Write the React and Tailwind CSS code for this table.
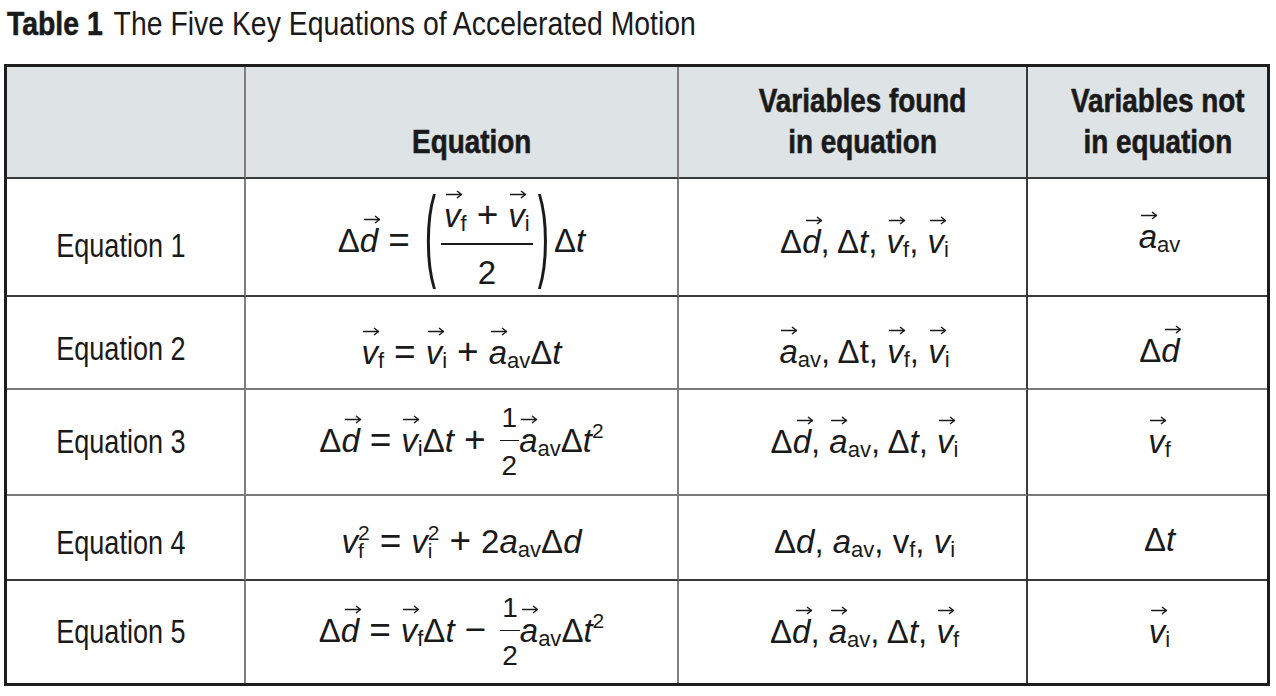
import React from "react";

const SANS = "font-['Liberation_Sans','Arial',sans-serif]";

const I = ({ children }) => <span className="italic">{children}</span>;

const Sub = ({ children }) => (
  <span className="not-italic text-[22px] leading-none align-[-4px]">{children}</span>
);

const Sup = ({ children }) => (
  <span className="not-italic text-[21px] leading-none align-[14px]">{children}</span>
);

const SubSup = ({ sub, sup }) => (
  <span className="inline-flex flex-col not-italic text-[21px] leading-[18px] align-[13px]">
    <span>{sup}</span>
    <span>{sub}</span>
  </span>
);

// small vector arrow drawn over a letter
const Arrow = ({ left }) => (
  <svg
    className={`absolute top-[-9px] ${left}`}
    width="17"
    height="9"
    viewBox="0 0 17 9"
    fill="none"
    stroke="currentColor"
    strokeWidth="1.5"
  >
    <path d="M0 4.5h15.5" />
    <path d="M11 1l4.5 3.5-4.5 3.5" strokeLinejoin="round" />
  </svg>
);

const V = ({ ch, sub }) => (
  <span className="relative inline-block leading-none">
    <span className="italic">{ch}</span>
    <Arrow left={ch === "d" ? "left-[4px]" : "left-[2px]"} />
    {sub && <Sub>{sub}</Sub>}
  </span>
);

const Op = ({ c }) => <span className="text-[37px] mx-[10px]">{c}</span>;

const Paren = ({ c }) => (
  <span className="inline-block text-[34px] leading-none scale-y-[3] align-[8px] mx-[5px]">{c}</span>
);

const Frac = ({ num, den }) => (
  <span className="inline-flex flex-col items-center align-[25px]">
    <span className="leading-[34px] pb-[8px] px-[3px]">{num}</span>
    <span className="w-full border-t-2 border-[#1a1a1a]" />
    <span className="leading-[34px] pt-[11px]">{den}</span>
  </span>
);

const Half = () => (
  <span className="inline-flex flex-col items-center text-[28px] align-[25px] ml-[4px]">
    <span className="leading-[28px] pb-[8px] px-[2px]">1</span>
    <span className="w-full border-t-[1.5px] border-[#1a1a1a]" />
    <span className="leading-[28px] pt-[11px]">2</span>
  </span>
);

const eqs = [
  <>
    Δ<V ch="d" />
    <Op c="=" />
    <Paren c="(" />
    <Frac
      num={
        <>
          <V ch="v" sub="f" />
          <Op c="+" />
          <V ch="v" sub="i" />
        </>
      }
      den="2"
    />
    <Paren c=")" />Δ<I>t</I>
  </>,
  <>
    <V ch="v" sub="f" />
    <Op c="=" />
    <V ch="v" sub="i" />
    <Op c="+" />
    <V ch="a" sub="av" />Δ<I>t</I>
  </>,
  <>
    Δ<V ch="d" />
    <Op c="=" />
    <V ch="v" sub="i" />Δ<I>t</I>
    <Op c="+" />
    <Half />
    <V ch="a" sub="av" />Δ<I>t</I>
    <Sup>2</Sup>
  </>,
  <>
    <I>v</I>
    <SubSup sub="f" sup="2" />
    <Op c="=" />
    <I>v</I>
    <SubSup sub="i" sup="2" />
    <Op c="+" />
    2<I>a</I>
    <Sub>av</Sub>Δ<I>d</I>
  </>,
  <>
    Δ<V ch="d" />
    <Op c="=" />
    <V ch="v" sub="f" />Δ<I>t</I>
    <Op c="−" />
    <Half />
    <V ch="a" sub="av" />Δ<I>t</I>
    <Sup>2</Sup>
  </>,
];

const found = [
  <>
    Δ<V ch="d" />, Δ<I>t</I>, <V ch="v" sub="f" />, <V ch="v" sub="i" />
  </>,
  <>
    <V ch="a" sub="av" />, Δt, <V ch="v" sub="f" />, <V ch="v" sub="i" />
  </>,
  <>
    Δ<V ch="d" />, <V ch="a" sub="av" />, Δ<I>t</I>, <V ch="v" sub="i" />
  </>,
  <>
    Δ<I>d</I>, <I>a</I>
    <Sub>av</Sub>, v<Sub>f</Sub>, <I>v</I>
    <Sub>i</Sub>
  </>,
  <>
    Δ<V ch="d" />, <V ch="a" sub="av" />, Δ<I>t</I>, <V ch="v" sub="f" />
  </>,
];

const missing = [
  <V ch="a" sub="av" />,
  <>
    Δ<V ch="d" />
  </>,
  <V ch="v" sub="f" />,
  <>
    Δ<I>t</I>
  </>,
  <V ch="v" sub="i" />,
];

// borders: columns 1-2 grey, column 3 dark; row lines vary like the print
const colLine = ["border-r-2 border-r-[#7f7f7f]", "border-r-2 border-r-[#7f7f7f]", "border-r-2 border-r-[#3a3a3a]", ""];
const rowLine = [
  "border-b-2 border-b-[#3a3a3a]",
  "border-b-2 border-b-[#7a7a7a]",
  "border-b-2 border-b-[#7a7a7a]",
  "border-b-2 border-b-[#3a3a3a]",
  "",
];

// per-cell top padding to sit each line on the printed baseline
const pads = [
  ["pt-[17px] pr-[10px]", "pt-[13px]", "pt-[9px] pl-[24px]", "pt-0 pl-[24px]"],
  ["pt-[12px] pr-[10px]", "pt-[20px]", "pt-[18px] pl-[24px]", "pt-[16px] pl-[24px]"],
  ["pt-0 pr-[10px]", "pt-0", "pt-0 pl-[24px]", "pt-0 pl-[24px]"],
  ["pt-[10px] pr-[10px]", "pt-[8px]", "pt-[8px] pl-[24px]", "pt-[4px] pl-[24px]"],
  ["pt-0 pr-[10px]", "pt-0", "pt-0 pl-[24px]", "pt-0 pl-[24px]"],
];

const headers = [
  null,
  <>Equation</>,
  <>
    Variables found
    <br />
    in equation
  </>,
  <>
    Variables not
    <br />
    in equation
  </>,
];

export default function App() {
  return (
    <div className={`w-[1276px] h-[696px] bg-white overflow-hidden text-[#1a1a1a] ${SANS}`}>
      <div className="text-[34px] leading-[34px] pl-[7px] pt-[6px] whitespace-nowrap">
        <span className="inline-block origin-left scale-x-[0.835]">
          <span className="font-bold [-webkit-text-stroke:0.6px_#1a1a1a]">Table 1</span>
          <span className="ml-[13px]">The Five Key Equations of Accelerated Motion</span>
        </span>
      </div>

      <div className="ml-[4px] mt-[24px] w-[1266px] grid grid-cols-[239px_433px_349px_239px] grid-rows-[112px_118px_93px_106px_85px_102px] border-[3px] border-[#1d1d1d]">
        {headers.map((h, c) => (
          <div
            key={`h${c}`}
            className={`bg-[#dee3e6] flex flex-col justify-end items-center text-center pb-[15px] font-bold text-[34px] leading-[41px] border-b-2 border-b-[#3a3a3a] ${colLine[c]} ${c > 0 ? "pl-[20px]" : ""}`}
          >
            {h && (
              <div className="whitespace-nowrap scale-x-[0.82] [-webkit-text-stroke:0.6px_#1a1a1a]">{h}</div>
            )}
          </div>
        ))}

        {eqs.map((eq, r) => {
          const cells = [
            <span className="inline-block scale-x-[0.82]">Equation {r + 1}</span>,
            eq,
            found[r],
            missing[r],
          ];
          return cells.map((content, c) => (
            <div
              key={`${r}-${c}`}
              className={`flex items-center justify-center text-[33px] ${colLine[c]} ${rowLine[r]} ${pads[r][c]}`}
            >
              <div className="whitespace-nowrap leading-[40px]">{content}</div>
            </div>
          ));
        })}
      </div>
    </div>
  );
}
